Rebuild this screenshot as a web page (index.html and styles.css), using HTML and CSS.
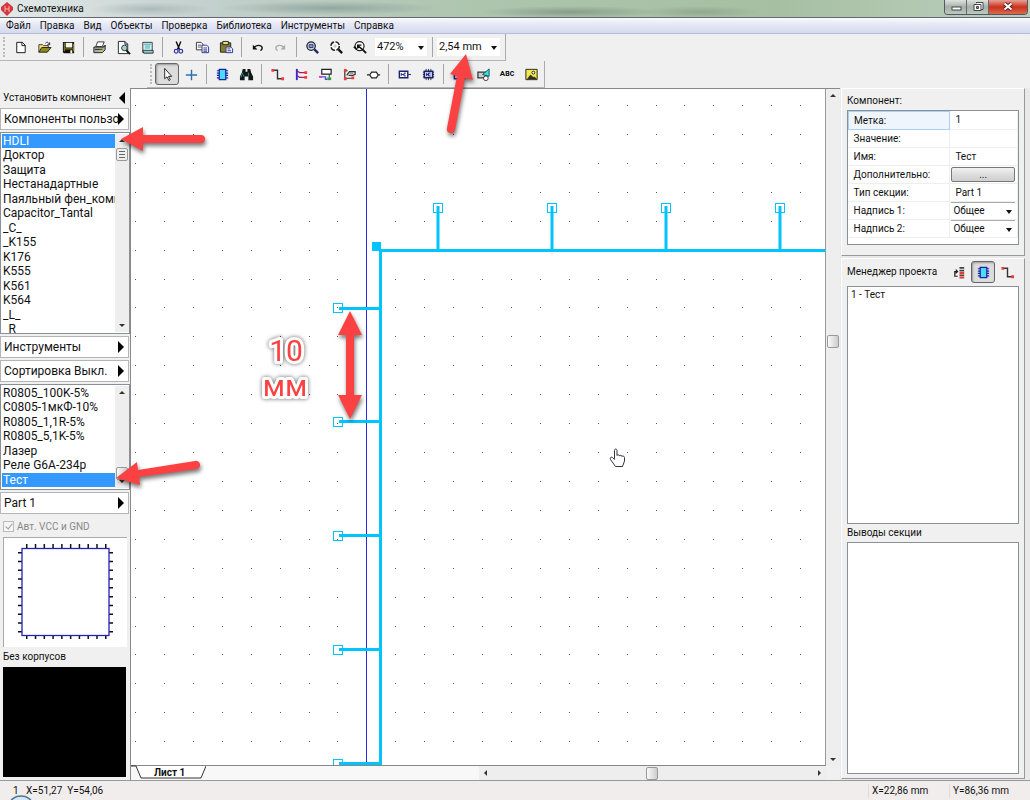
FILE: index.html
```html
<!DOCTYPE html>
<html lang="ru">

<head>
    <meta charset="UTF-8">
    <meta name="viewport" content="width=device-width, initial-scale=1.0">
    <title>Схемотехника</title>
    <link rel="stylesheet" href="styles.css">
</head>

<body>

    <!-- Icons -->
    <svg class="sprite" width="0" height="0">
        <symbol id="i-new" viewBox="0 0 16 16"><path d="M4 2.500h6l3 3v8h-9z" fill="#fff" stroke="#111" /><path d="M9.500 2.500v3.500h3.500" fill="none" stroke="#111" /></symbol>
        <symbol id="i-open" viewBox="0 0 16 16"><path d="M2 13V5h4l1 1h5v3" fill="#ffe96a" stroke="#333" /><path d="M2 13l3-5h10l-4 5z" fill="#8f8a1c" stroke="#222" /><path d="M9 3.500c2-2 3-1 4 1m.5-2v2.500h-2.500" fill="none" stroke="#222" /></symbol>
        <symbol id="i-save" viewBox="0 0 16 16"><path d="M2 2h12v12H3l-1-1z" fill="#111" /><path d="M5 3h7v5H5z" fill="#f5f5e8" /><path d="M3 3h1v9H3zM13 4h1v8h-1z" fill="#99921f" /><path d="M4 9h9v1H4z" fill="#99921f" /><path d="M10 11h2v3h-2z" fill="#fff" /></symbol>
        <symbol id="i-print" viewBox="0 0 16 16"><path d="M6 2h7l-2 5H4z" fill="#fff" stroke="#333" /><path d="M2 7.500h10l2-2v5l-3 3H2z" fill="#aaa" stroke="#222" /><path d="M3 10h8M12 8l2-2" stroke="#222" /><path d="M8 11.500h3" stroke="#d6cf25" stroke-width="2" /></symbol>
        <symbol id="i-preview" viewBox="0 0 16 16"><path d="M2.500 1.500h7l3 3v10h-10z" fill="#fff" stroke="#222" /><path d="M9.500 1.500v3h3" fill="none" stroke="#222" /><circle cx="9" cy="8.500" r="3" fill="#9cd4d8" stroke="#333" /><path d="M11 11l4 4" stroke="#111" stroke-width="2" /></symbol>
        <symbol id="i-report" viewBox="0 0 16 16"><path d="M3 2.500h10v11H3z" fill="#dff" stroke="#333" /><path d="M4 4.500h8M5 6.500h6M5 8.500h6" stroke="#3b9ba3" /><path d="M3 11h11v3H4z" fill="#8fcfd4" stroke="#333" /></symbol>
        <symbol id="i-cut" viewBox="0 0 16 16"><path d="M5.500 1.500L9 10M10.500 1.500L7 10" stroke="#111" stroke-width="1.500" /><circle cx="5.500" cy="12" r="2" fill="none" stroke="#3238a8" stroke-width="1.300" /><circle cx="10.500" cy="12" r="2" fill="none" stroke="#3238a8" stroke-width="1.300" /></symbol>
        <symbol id="i-copy" viewBox="0 0 16 16"><path d="M1.500 2.500h5l2 2v6h-7z" fill="#fff" stroke="#333" /><path d="M3 5.500h4M3 7.500h4" stroke="#555" /><path d="M7.500 5.500h5l2 2v6h-7z" fill="#fff" stroke="#2b3192" /><path d="M9 8.500h4M9 10.500h4M9 12h4" stroke="#2b3192" /></symbol>
        <symbol id="i-paste" viewBox="0 0 16 16"><path d="M1.500 3h11v10h-11z" fill="#85802b" stroke="#222" /><path d="M4 1.500h6V5H4z" fill="#e5df8a" stroke="#222" /><path d="M7.500 7.500h5l2 2v4h-7z" fill="#fff" stroke="#2b3192" /><path d="M9 9.500h3M9 11.500h4" stroke="#2b3192" /></symbol>
        <symbol id="i-undo" viewBox="0 0 16 16"><path d="M4 8c3-3 8-3 9 0 0 2-1 3-2 3" fill="none" stroke="currentColor" stroke-width="1.400" /><path d="M3 5v5h5z" fill="currentColor" /></symbol>
        <symbol id="i-zoom" viewBox="0 0 16 16"><circle cx="6.500" cy="6.500" r="4.500" fill="#bcd5e8" stroke="#222" stroke-width="1.300" /><path d="M4.500 5h4v3h-4z" fill="#7ba7d6" stroke="#336" /><path d="M10 10l4 4" stroke="#226" stroke-width="2.500" /></symbol>
        <symbol id="i-zoomfit" viewBox="0 0 16 16"><circle cx="6.500" cy="6.500" r="4.500" fill="#fff" stroke="#222" stroke-width="1.500" stroke-dasharray="5.500 1.500" /><path d="M4.500 6.500h4M6.500 4.500v4" stroke="#bbb" /><path d="M10 10l4 4" stroke="#111" stroke-width="2.500" /></symbol>
        <symbol id="i-zoomprev" viewBox="0 0 16 16"><circle cx="7" cy="6.500" r="4.800" fill="#fff" stroke="#222" stroke-width="1.300" /><path d="M5 9V5.500h4M5 6l5 4" fill="none" stroke="#111" stroke-width="1.500" /><path d="M1 7l3 3M10 10l4 4" stroke="#111" stroke-width="2" /></symbol>
        <symbol id="i-cursor" viewBox="0 0 16 16"><path d="M5 1.500v11l2.500-2 2 4 1.500-1-2-3.500h3.500z" fill="#fff" stroke="#222" /></symbol>
        <symbol id="i-cross" viewBox="0 0 16 16"><path d="M2 8.500h12M8 3v11" stroke="#2d6fae" stroke-width="1.500" /></symbol>
        <symbol id="i-chip" viewBox="0 0 16 16"><path d="M2 4h12M2 6.500h12M2 9h12M2 11.500h12" stroke="#1c22b0" stroke-width="1.300" /><path d="M4.500 2.500h7v11h-7z" fill="#49dcf4" stroke="#1c22a0" stroke-width="1.300" /></symbol>
        <symbol id="i-find" viewBox="0 0 16 16"><path d="M4 2h3v3h2V2h3l1 4 2 4v4h-5v-4H6v4H1v-4l2-4z" fill="#101818" /><path d="M4 6l-2 5M10 6v4M5 8v2" stroke="#2f9c9c" /></symbol>
        <symbol id="i-wire" viewBox="0 0 16 16"><path d="M3 3.500h5v9h5" fill="none" stroke="#333" stroke-width="1.500" /><path d="M1.500 2h3v3h-3zM12 11h3v3h-3z" fill="#f23a3a" /></symbol>
        <symbol id="i-bus" viewBox="0 0 16 16"><path d="M3 2v12" stroke="#2a2ae0" stroke-width="2" /><path d="M3 4l3 2h6M3 9l3 2h6" fill="none" stroke="#a02060" stroke-width="1.300" /><path d="M11 4.500h3v3h-3zM11 9.500h3v3h-3z" fill="#f23a3a" /></symbol>
        <symbol id="i-label" viewBox="0 0 16 16"><path d="M4 2.500h10v5H4z" fill="#fff" stroke="#222" stroke-width="1.300" /><path d="M2 10.500h6v2.500h2" fill="none" stroke="#5a4ae0" stroke-width="1.500" /><path d="M1 9.500h3v2H1z" fill="#e23ac0" /><path d="M12 8v3" stroke="#222" /><path d="M10 11h4v3h-4z" fill="#1ea33a" /></symbol>
        <symbol id="i-route" viewBox="0 0 16 16"><path d="M3 13V4h3M4 12h8M5 9l3-4h6v3l-3 1H7" fill="none" stroke="#333" stroke-width="1.300" /><path d="M8 6.500h4" stroke="#555" /><path d="M2 2h3v3H2zM2 11h3v3H2zM10 10h3v3h-3z" fill="#f23a3a" /></symbol>
        <symbol id="i-port" viewBox="0 0 16 16"><path d="M1 8.500h3l2-3h5l2 3-2 3H6l-2-3M13 8.500h2" fill="#fff" stroke="#222" stroke-width="1.300" /></symbol>
        <symbol id="i-part" viewBox="0 0 16 16"><path d="M2.500 4.500h9v7h-9z" fill="#fff" stroke="#1c2270" stroke-width="1.500" /><path d="M4.500 6.500v3M9.500 6.500h-2v3h2M4.500 8h3M12 8h3" stroke="#1c2270" fill="none" /></symbol>
        <symbol id="i-block" viewBox="0 0 16 16"><path d="M5.500 2v12M8 2v12M10.500 2v12M2 5.500h12M2 8h12M2 10.500h12" stroke="#333" /><path d="M3.500 4.500h9v7h-9z" fill="#c5c5e5" stroke="#1c2270" stroke-width="1.500" /><path d="M6 6.500v3M10 6.500H8v3h2M6 8h2" fill="none" stroke="#1c2270" /></symbol>
        <symbol id="i-table" viewBox="0 0 16 16"><path d="M2.500 3.500h11v9h-11zM2.500 8h11M6.500 3v9M10 3v9" fill="#fff" stroke="#2529a0" stroke-width="1.500" /></symbol>
        <symbol id="i-shape" viewBox="0 0 16 16"><path d="M2 5.500h8v6H2z" fill="#ccc" stroke="#333" stroke-width="1.300" /><path d="M14 2v8L7 8z" fill="#3fdbe4" stroke="#155" /><circle cx="10.500" cy="12" r="2.500" fill="#fff" stroke="#333" /></symbol>
        <symbol id="i-image" viewBox="0 0 16 16"><path d="M2 2.500h12v11H2z" fill="#f4e84a" stroke="#222" /><path d="M3 13l4-5 3 3 1-1 3 3z" fill="#332" /><circle cx="10" cy="6" r="1.500" fill="#fff" stroke="#222" /></symbol>
        <symbol id="i-sort" viewBox="0 0 16 16"><path d="M8 3h5M8 6h5M8 11h5" stroke="#444" stroke-width="2" /><path d="M8 8.500h5M8 13.500h5" stroke="#e33" stroke-width="2" /><path d="M6 7H3v5h3M4 5l2 2-2 2" fill="none" stroke="#222" stroke-width="1.300" /></symbol>
    </svg>

    <header class="titlebar">
        <svg class="logo" viewBox="0 0 14 14"><path d="M7 0l6 5v3l-6 6-6-6V5z" fill="#d9363b" /><path d="M5 4v6M9 4v6M5 7h4" stroke="#f5b5b5" fill="none" /></svg>
        <span class="title">Схемотехника</span>
        <div class="window-buttons">
            <button type="button" class="win" aria-label="Свернуть"><svg viewBox="0 0 22 14"><rect x="7" y="7" width="9" height="3" fill="#fff" stroke="#444" /></svg></button>
            <button type="button" class="win" aria-label="Развернуть"><svg viewBox="0 0 22 14"><path d="M9 2.500h7v7h-2M7 4.500h7v6H7z" fill="#fff" stroke="#444" /><path d="M9.500 6.500h2v2h-2z" fill="#888" stroke="#444" /></svg></button>
            <button type="button" class="win close" aria-label="Закрыть"><svg viewBox="0 0 22 14"><path d="M7.500 3.500l7 6M14.500 3.500l-7 6" stroke="#5b2020" stroke-width="4" /><path d="M7.500 3.500l7 6M14.500 3.500l-7 6" stroke="#fff" stroke-width="2" /></svg></button>
        </div>
    </header>

    <nav class="menu">
        <button type="button">Файл</button>
        <button type="button">Правка</button>
        <button type="button">Вид</button>
        <button type="button">Объекты</button>
        <button type="button">Проверка</button>
        <button type="button">Библиотека</button>
        <button type="button">Инструменты</button>
        <button type="button">Справка</button>
    </nav>

    <div class="toolbar">
        <span class="grip"></span>
        <button type="button" aria-label="Новый"><svg><use href="#i-new" /></svg></button>
        <button type="button" aria-label="Открыть"><svg><use href="#i-open" /></svg></button>
        <button type="button" aria-label="Сохранить"><svg><use href="#i-save" /></svg></button>
        <span class="sep"></span>
        <button type="button" aria-label="Печать"><svg><use href="#i-print" /></svg></button>
        <button type="button" aria-label="Просмотр"><svg><use href="#i-preview" /></svg></button>
        <button type="button" aria-label="Штамп"><svg><use href="#i-report" /></svg></button>
        <span class="sep"></span>
        <button type="button" aria-label="Вырезать"><svg><use href="#i-cut" /></svg></button>
        <button type="button" aria-label="Копировать"><svg><use href="#i-copy" /></svg></button>
        <button type="button" aria-label="Вставить"><svg><use href="#i-paste" /></svg></button>
        <span class="sep"></span>
        <button type="button" aria-label="Отменить"><svg><use href="#i-undo" /></svg></button>
        <button type="button" class="redo" aria-label="Вернуть" disabled><svg><use href="#i-undo" /></svg></button>
        <span class="sep"></span>
        <button type="button" aria-label="Масштаб рамкой"><svg><use href="#i-zoom" /></svg></button>
        <button type="button" aria-label="Показать всё"><svg><use href="#i-zoomfit" /></svg></button>
        <button type="button" aria-label="Прежний масштаб"><svg><use href="#i-zoomprev" /></svg></button>
        <span class="combo zoom"><select aria-label="Масштаб"><option>472%</option></select></span>
        <span class="sep"></span>
        <span class="combo grid"><select aria-label="Шаг сетки"><option>2,54 mm</option></select></span>
    </div>

    <div class="toolbar objects">
        <span class="grip"></span>
        <button type="button" class="on" aria-label="Выбор"><svg><use href="#i-cursor" /></svg></button>
        <button type="button" aria-label="Начало координат"><svg><use href="#i-cross" /></svg></button>
        <span class="sep"></span>
        <button type="button" aria-label="Компонент"><svg><use href="#i-chip" /></svg></button>
        <button type="button" aria-label="Найти"><svg><use href="#i-find" /></svg></button>
        <span class="sep"></span>
        <button type="button" aria-label="Связь"><svg><use href="#i-wire" /></svg></button>
        <button type="button" aria-label="Шина"><svg><use href="#i-bus" /></svg></button>
        <button type="button" aria-label="Метка связи"><svg><use href="#i-label" /></svg></button>
        <button type="button" aria-label="Трассировка"><svg><use href="#i-route" /></svg></button>
        <button type="button" aria-label="Порт"><svg><use href="#i-port" /></svg></button>
        <span class="sep"></span>
        <button type="button" aria-label="Блок"><svg><use href="#i-part" /></svg></button>
        <button type="button" aria-label="Иерархия"><svg><use href="#i-block" /></svg></button>
        <span class="sep"></span>
        <button type="button" aria-label="Таблица"><svg><use href="#i-table" /></svg></button>
        <button type="button" aria-label="Фигуры"><svg><use href="#i-shape" /></svg></button>
        <button type="button" class="abc">Abc</button>
        <button type="button" aria-label="Рисунок"><svg><use href="#i-image" /></svg></button>
    </div>

    <main class="workspace">
        <aside class="left">
            <button type="button" class="place">Установить компонент<i class="tri back"></i></button>
            <button type="button" class="drop"><span>Компоненты пользователя</span><i class="tri"></i></button>
            <div class="listbox libs">
                <ul role="listbox" aria-label="Библиотеки">
                    <li role="option" aria-selected="true">HDLI</li>
                    <li role="option">Доктор</li>
                    <li role="option">Защита</li>
                    <li role="option">Нестанадартные</li>
                    <li role="option">Паяльный фен_компоненты</li>
                    <li role="option">Capacitor_Tantal</li>
                    <li role="option">_C_</li>
                    <li role="option">_K155</li>
                    <li role="option">K176</li>
                    <li role="option">K555</li>
                    <li role="option">K561</li>
                    <li role="option">K564</li>
                    <li role="option">_L_</li>
                    <li role="option">_R_</li>
                </ul>
                <div class="scroll"><i class="up"></i><b class="thumb"></b><i class="down"></i></div>
            </div>
            <button type="button" class="drop"><span>Инструменты</span><i class="tri"></i></button>
            <button type="button" class="drop"><span>Сортировка Выкл.</span><i class="tri"></i></button>
            <div class="listbox parts">
                <ul role="listbox" aria-label="Компоненты">
                    <li role="option">R0805_100K-5%</li>
                    <li role="option">C0805-1мкФ-10%</li>
                    <li role="option">R0805_1,1R-5%</li>
                    <li role="option">R0805_5,1K-5%</li>
                    <li role="option">Лазер</li>
                    <li role="option">Реле G6A-234p</li>
                    <li role="option" aria-selected="true">Тест</li>
                </ul>
                <div class="scroll end"><i class="up"></i><b class="thumb"></b><i class="down"></i></div>
            </div>
            <button type="button" class="drop"><span>Part 1</span><i class="tri"></i></button>
            <label class="check"><input type="checkbox" checked disabled>Авт. VCC и GND</label>
            <svg class="symbol" viewBox="0 0 123 109">
                <g stroke="#111" stroke-width="4" stroke-dasharray="1.500 7.280">
                    <path d="M22 8h82M22 99h82" />
                    <path d="M16 14v82M107 14v82" />
                </g>
                <rect x="18" y="10.500" width="87" height="87" fill="#fff" stroke="#2222b8" stroke-width="1.300" />
            </svg>
            <p class="caption">Без корпусов</p>
            <div class="package"></div>
        </aside>

        <section class="sheet">
            <div class="canvas">
                <svg class="drawing">
                    <path id="dots" fill="#555" />
                    <path d="M235.500 0v2000" stroke="#2a2ae0" />
                    <g class="wire">
                        <path d="M249.500 2000V161.500H2000" />
                        <path d="M307 117v45M421 117v45M535 117v45M649 117v45" />
                        <path d="M208 219.500h42M208 332.500h42M208 446.500h42M208 560.500h42M208 674.500h42" />
                    </g>
                    <rect x="241" y="153" width="9" height="9" fill="#00c3ff" />
                    <g class="ends">
                        <rect x="302.500" y="114.500" width="9" height="9" />
                        <rect x="416.500" y="114.500" width="9" height="9" />
                        <rect x="530.500" y="114.500" width="9" height="9" />
                        <rect x="644.500" y="114.500" width="9" height="9" />
                        <rect x="202.500" y="214.500" width="9" height="9" />
                        <rect x="202.500" y="328.500" width="9" height="9" />
                        <rect x="202.500" y="442.500" width="9" height="9" />
                        <rect x="202.500" y="556.500" width="9" height="9" />
                        <rect x="202.500" y="670.500" width="9" height="9" />
                    </g>
                    <path class="hand" d="M483.500 369.500v-8c0-2 2.500-2 2.500 0v5c0-1 2.500-1 2.500 .5 0-1 2.500-1 2.500 .5 0-1 2.500-.5 2.500 1v3.500l-2 5.500h-7l-5-7c-1-2 1-3 2-2l2 2z" />
                </svg>
            </div>
            <div class="scroll tall"><i class="up"></i><b class="thumb"></b><i class="down"></i></div>
            <div class="sheetbar">
                <div class="tabs">
                    <svg class="tab-edge" viewBox="0 0 75 13"><path d="M0 .5h5l5 12h60l5-12" fill="#fff" stroke="#333" /></svg>
                    <button type="button" class="tab">Лист 1</button>
                </div>
                <div class="scroll flat"><i class="prev"></i><b class="thumb"></b><i class="next"></i></div>
            </div>
        </section>

        <aside class="right">
            <section class="panel">
                <h2>Компонент:</h2>
                <div class="props">
                    <table>
                        <tr><th class="current">Метка:</th><td>1</td></tr>
                        <tr><th>Значение:</th><td></td></tr>
                        <tr><th>Имя:</th><td>Тест</td></tr>
                        <tr><th>Дополнительно:</th><td class="ctl"><button type="button" class="more">...</button></td></tr>
                        <tr><th>Тип секции:</th><td>Part 1</td></tr>
                        <tr><th><label for="text1">Надпись 1:</label></th><td class="ctl"><span class="combo"><select id="text1"><option>Общее</option></select></span></td></tr>
                        <tr><th><label for="text2">Надпись 2:</label></th><td class="ctl"><span class="combo"><select id="text2"><option>Общее</option></select></span></td></tr>
                    </table>
                </div>
            </section>
            <section class="panel manager">
                <div class="manager-head">
                    <h2>Менеджер проекта</h2>
                    <button type="button" aria-label="Сортировка"><svg><use href="#i-sort" /></svg></button>
                    <button type="button" class="on" aria-label="Компоненты"><svg><use href="#i-chip" /></svg></button>
                    <button type="button" aria-label="Связи"><svg><use href="#i-wire" /></svg></button>
                </div>
                <div class="box tree">1 - Тест</div>
                <h2>Выводы секции</h2>
                <div class="box"></div>
            </section>
        </aside>
    </main>

    <footer class="status">
        <span class="cursor-pos">1&nbsp;&nbsp; X=51,27&nbsp; Y=54,06</span>
        <span class="cell">X=22,86 mm</span>
        <span class="cell">Y=86,36 mm</span>
        <svg class="orb" viewBox="0 0 24 5"><ellipse cx="12" cy="9" rx="11" ry="8" fill="#d7e6f2" stroke="#4d7899" stroke-width="1.500" /></svg>
    </footer>

    <!-- Notes drawn over the window -->
    <svg class="notes">
        <g class="arrows">
            <path d="M121 139l22-12v8h58a4 4 0 0 1 0 8h-58v8z" />
            <path d="M116 478l21-16 1 8 57-9a4 4 0 0 1 2 8l-58 8 1 8z" />
            <path d="M466 54l7 26-8-2-10 52a4 4 0 0 1-8-2l10-52-7-2z" />
            <path d="M350 311l12 24h-8v60h8l-12 24-12-24h8v-60h-8z" />
        </g>
        <g class="size">
            <text x="286" y="361">10</text>
            <text x="285" y="396">мм</text>
        </g>
    </svg>

    <script>
        // grid dots, one every 28.92px
        const step = 28.92;
        let d = "";
        for (let row = 0; row < 60; row++) {
            for (let col = 0; col < 80; col++) {
                const x = Math.round(4 + col * step);
                const y = Math.round(16 + row * step);
                d += `M${x} ${y}h1v1h-1z`;
            }
        }
        document.getElementById("dots").setAttribute("d", d);
    </script>

</body>

</html>
```

FILE: styles.css
```css
* {
    box-sizing: border-box;
}

body {
    margin: 0;
    height: 100vh;
    display: flex;
    flex-direction: column;
    position: relative;
    overflow: hidden;
    background: #f0f0f0;
    color: #111;
    font: 10px/14px Roboto, "Noto Sans", sans-serif;
}

button,
select {
    font: inherit;
    color: inherit;
    background: none;
    border: 0;
    padding: 0;
    margin: 0;
}

h2,
p,
ul {
    margin: 0;
    padding: 0;
    font-size: inherit;
    font-weight: normal;
}

.sprite {
    position: absolute;
}

/* title and menu */
.titlebar {
    flex: none;
    height: 18px;
    display: flex;
    align-items: center;
    padding-right: 2px;
    border-bottom: 1px solid #667;
    background:
        radial-gradient(ellipse 60px 7px at 150px 9px, #8ea0a080, transparent),
        radial-gradient(ellipse 110px 7px at 330px 8px, #6f848880, transparent),
        radial-gradient(ellipse 90px 6px at 570px 12px, #6c806f90, transparent),
        radial-gradient(ellipse 60px 6px at 700px 12px, #7b907d80, transparent),
        linear-gradient(90deg, #e3e9ea, #c3d0cd 20%, #aec5ae 45%, #a6bfa2 75%, #bccfbd);
}

.logo {
    width: 14px;
    height: 14px;
}

.title {
    flex: 1;
    padding-left: 3px;
}

.window-buttons {
    align-self: flex-start;
    display: flex;
    border: 1px solid #556;
    border-top: 0;
    border-radius: 0 0 4px 4px;
    overflow: hidden;
}

.win {
    width: 22px;
    height: 14px;
    border-right: 1px solid #667;
    background: linear-gradient(#dde3dd, #a5b0a8 50%, #bcc9c0);
}

.win svg {
    display: block;
    width: 22px;
    height: 14px;
}

.win.close {
    width: 38px;
    border: 0;
    background: linear-gradient(#e6a294, #c8321c 50%, #dd6a4c);
}

.win.close svg {
    width: 100%;
}

.menu {
    flex: none;
    height: 16px;
    display: flex;
    gap: 9px;
    padding-left: 6px;
    border-bottom: 1px solid #b5bbd8;
    background: linear-gradient(#fafbfd, #e6e9f5 40%, #d5daee);
}

/* toolbars */
.toolbar {
    flex: none;
    align-self: flex-start;
    height: 27px;
    display: flex;
    align-items: center;
    padding-right: 5px;
    border-right: 1px solid #aaa;
    border-bottom: 1px solid #b5b5b5;
}

.toolbar.objects {
    margin-left: 147px;
    padding-right: 1px;
}

.grip {
    width: 3px;
    height: 20px;
    margin: 0 2px 0 3px;
    border-left: 2px dotted #bbb;
}

.toolbar button,
.manager-head button {
    flex: none;
    width: 24px;
    height: 22px;
    display: flex;
    align-items: center;
    justify-content: center;
}

.toolbar svg,
.manager-head svg {
    width: 15px;
    height: 15px;
}

.toolbar button.on,
.manager-head button.on {
    border: 1px solid #666;
    border-radius: 3px;
    background: #dcdcdc;
    box-shadow: inset 1px 1px 2px #999;
}

.toolbar .redo {
    color: #aaa;
    transform: scaleX(-1);
}

.toolbar .abc {
    font-size: 8px;
    font-weight: bold;
    font-variant: small-caps;
}

.sep {
    width: 1px;
    height: 20px;
    margin: 0 3px;
    background: #a5a5a5;
}

.combo {
    position: relative;
    display: block;
    height: 18px;
    background: #fff;
}

.combo select {
    appearance: none;
    width: 100%;
    height: 100%;
    padding-left: 2px;
    outline: 0;
}

.combo::after {
    content: "";
    position: absolute;
    right: 3px;
    top: 8px;
    border: 3px solid transparent;
    border-top: 4px solid #111;
    border-bottom: 0;
    pointer-events: none;
}

.combo.zoom {
    width: 52px;
    margin: 0 2px 0 3px;
}

.combo.grid {
    width: 63px;
    margin-left: 1px;
}

.toolbar .combo {
    font-size: 11px;
}

/* three columns */
.workspace {
    flex: 1;
    min-height: 0;
    display: flex;
}

.left {
    flex: none;
    width: 131px;
    display: flex;
    flex-direction: column;
    padding-top: 1px;
    border-right: 1px solid #888;
}

.place,
.drop {
    position: relative;
    text-align: left;
    white-space: nowrap;
}

.place {
    height: 17px;
    padding-left: 3px;
    margin-bottom: 2px;
}

.drop {
    height: 22px;
    margin: 0 1px 2px 0;
    padding-left: 3px;
    border: 1px solid #b5b5b5;
    background: #fff;
    font-size: 12px;
}

.drop span {
    display: block;
    overflow: hidden;
    width: 114px;
}

.tri {
    position: absolute;
    right: 4px;
    top: 4px;
    border: 6px solid transparent;
    border-left: 6px solid #000;
    border-right: 0;
}

.tri.back {
    top: 3px;
    right: 5px;
    border-left: 0;
    border-right: 6px solid #000;
}

.listbox {
    display: flex;
    border: 1px solid #8a8f99;
    background: #fff;
    margin-bottom: 2px;
    padding: 1px 0 1px 1px;
    overflow: hidden;
}

.listbox ul {
    flex: 1;
    min-width: 0;
    display: grid;
    grid-auto-rows: 14px 15px;
    list-style: none;
    font-size: 12px;
}

.listbox li {
    padding-left: 1px;
    overflow: hidden;
    white-space: nowrap;
}

.listbox li[aria-selected] {
    background: #3399ff;
    color: #fff;
}

.libs {
    height: 202px;
}

.parts {
    height: 106px;
}

.check {
    height: 21px;
    display: flex;
    align-items: center;
    gap: 3px;
    padding-left: 3px;
    color: #888;
}

.check input {
    appearance: none;
    width: 11px;
    height: 11px;
    margin: 0;
    border: 1px solid #bbb;
    background: #f6f6f6;
}

.check input::after {
    content: "";
    display: block;
    width: 3px;
    height: 6px;
    margin-left: 3px;
    border: solid #999;
    border-width: 0 1px 1px 0;
    transform: rotate(40deg);
}

.symbol {
    flex: none;
    width: 124px;
    height: 110px;
    margin-left: 3px;
    border: 1px solid #aaa;
    border-width: 1px 0 0 1px;
    background: #fff;
}

.caption {
    padding: 3px;
    line-height: 14px;
}

.package {
    flex: 1;
    margin: 0 4px 3px 3px;
    background: #000;
}

/* scroll bars */
.scroll {
    flex: none;
    width: 14px;
    display: flex;
    flex-direction: column;
    align-items: center;
    justify-content: space-between;
    padding: 5px 0;
    background: #eee;
}

.scroll i {
    border: 3px solid transparent;
}

.scroll .up {
    border-top: 0;
    border-bottom-color: #333;
}

.scroll .down {
    border-bottom: 0;
    border-top-color: #333;
}

.scroll .prev {
    border-left: 0;
    border-right-color: #333;
}

.scroll .next {
    border-right: 0;
    border-left-color: #333;
}

.thumb {
    width: 12px;
    height: 13px;
    border: 1px solid #999;
    border-radius: 2px;
    background: linear-gradient(90deg, #fafafa, #ccc);
}

.listbox .thumb {
    margin: 6px 0 auto;
}

.libs .thumb {
    background: repeating-linear-gradient(#666 0 1px, #eee 1px 3px) center / 6px 7px no-repeat #eee;
}

.listbox .end .thumb {
    margin: auto 0 0;
}

.tall .thumb {
    margin: 238px 0 auto;
}

/* schematic sheet */
.sheet {
    flex: 1;
    min-width: 0;
    display: grid;
    grid-template: minmax(0, 1fr) 14px / minmax(0, 1fr) 14px;
    border-top: 1px solid #888;
}

.canvas {
    background: #fff;
    border-right: 1px solid #999;
    border-bottom: 1px solid #888;
    overflow: hidden;
}

.drawing {
    display: block;
    width: 100%;
    height: 100%;
}

.wire {
    fill: none;
    stroke: #00c3ff;
    stroke-width: 3px;
}

.ends {
    fill: none;
    stroke: #00c3ff;
}

.hand {
    fill: #fff;
    stroke: #334;
}

.sheetbar {
    grid-column: 1 / 3;
    display: flex;
    padding-right: 14px;
}

.tabs {
    flex: 1;
    position: relative;
    background: #f8f8f8;
}

.tab-edge {
    position: absolute;
    left: 0;
    top: -1px;
    width: 75px;
    height: 14px;
}

.tab {
    position: relative;
    display: block;
    margin-left: 23px;
    font-weight: bold;
    line-height: 13px;
}

.scroll.flat {
    width: 50%;
    flex-direction: row;
    padding: 0 5px;
}

/* properties */
.right {
    flex: none;
    width: 190px;
    padding: 0 5px 1px 1px;
    display: flex;
    flex-direction: column;
    gap: 2px;
    background: #e9e9e9;
}

.panel {
    padding: 5px 5px 10px;
    background: #f0f0f0;
    border: 1px solid #fff;
    border-right-color: #999;
    border-bottom-color: #999;
}

.props {
    height: 135px;
    margin-top: 2px;
    border: 1px solid #8a8f99;
    background: #fff;
}

.props table {
    width: 100%;
    border-collapse: collapse;
    table-layout: fixed;
}

.props th,
.props td {
    height: 18px;
    padding: 0 0 0 5px;
    border-bottom: 1px solid #eee;
    border-right: 1px solid #eee;
    text-align: left;
    font-weight: normal;
}

.props th {
    width: 60%;
}

.props .current {
    background: #eef5fd;
    border: 1px solid #a9d0f0;
}

.props .ctl {
    padding: 0 2px 0 1px;
}

.props .combo {
    height: 17px;
    border-top: 1px solid #aaa;
}

.props .combo::after {
    top: 7px;
}

.more {
    display: block;
    width: 100%;
    height: 15px;
    border: 1px solid #777;
    border-radius: 2px;
    background: linear-gradient(#f2f2f2, #ddd 50%, #cfcfcf);
    line-height: 10px;
}

.manager {
    flex: 1;
    min-height: 0;
    display: flex;
    flex-direction: column;
    padding: 2px 5px 4px;
}

.manager-head {
    display: flex;
    align-items: center;
    margin-bottom: 3px;
}

.manager-head h2 {
    flex: 1;
}

.box {
    flex: 35;
    padding: 1px 3px;
    border: 1px solid #8a8f99;
    background: #fff;
}

.box.tree {
    flex: 36;
}

.manager > h2 {
    padding: 2px 0;
}

/* status bar */
.status {
    flex: none;
    position: relative;
    height: 20px;
    display: flex;
    align-items: center;
    border-top: 1px solid #999;
    background: #f0edec;
}

.cursor-pos {
    flex: 1;
    padding-left: 13px;
}

.cell {
    width: 81px;
    padding-left: 3px;
    border-left: 1px solid #ddd;
}

.orb {
    position: absolute;
    left: 9px;
    bottom: 0;
    width: 24px;
    height: 5px;
}

/* notes */
.notes {
    position: absolute;
    inset: 0;
    width: 100%;
    height: 100%;
    pointer-events: none;
}

.arrows {
    fill: #fb4141;
    filter: drop-shadow(1px 3px 2px #0008);
}

.size {
    fill: #fb4141;
    stroke: #fff;
    stroke-width: 6px;
    stroke-linejoin: round;
    paint-order: stroke;
    font-size: 30px;
    text-anchor: middle;
    filter: drop-shadow(0 0 2px #0009);
}
```
